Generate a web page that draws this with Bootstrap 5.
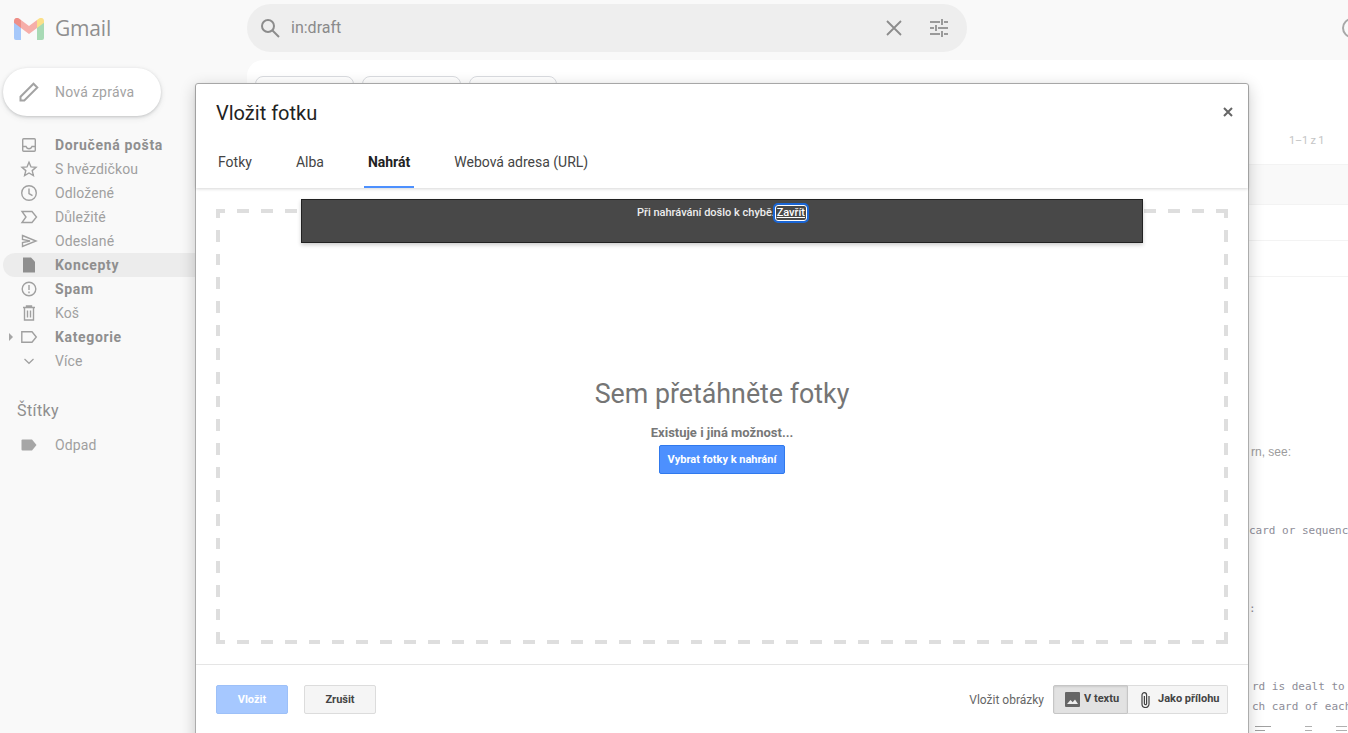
<!DOCTYPE html>
<html lang="cs">
<head>
  <meta charset="UTF-8" />
  <title>Gmail - Vložit fotku</title>
  <link href="https://cdn.jsdelivr.net/npm/bootstrap@5.3.0/dist/css/bootstrap.min.css" rel="stylesheet">
  <style>
    html, body { height: 733px; overflow: hidden; }
    body { background: #f9f9f9; font-family: Roboto, "Liberation Sans", sans-serif; position: relative; }

    /* gmail behind the dialog */
    .top-bar { height: 60px; }
    .logo-cell { width: 247px; padding-left: 14px; gap: 11px; margin-top: -3px; }
    .logo-word { font-family: "Open Sans", sans-serif; font-size: 21px; color: #8f8f8f; letter-spacing: -.2px; }
    .search-box { width: 720px; height: 48px; margin-top: -4px; background: #eeeeee; border-radius: 24px; color: #8a8a8a; font-size: 16px; }
    .search-lens { margin-left: 13px; margin-right: 11px; }
    .search-x { margin-right: 28px; }
    .search-tune { margin-right: 19px; }
    .help-ring { margin-left: auto; margin-right: -16px; margin-top: -4px; }

    .side-col { width: 247px; flex: none; }
    .compose-btn { width: 158px; height: 48px; margin: 8px 0 17px 3px; background: #fff; border-radius: 24px; box-shadow: 0 1px 3px rgba(60,64,67,.22), 0 2px 6px rgba(60,64,67,.1); color: #a3a3a3; font-size: 14px; letter-spacing: .25px; padding-left: 16px; gap: 16px; }
    .side-item { height: 24px; margin-left: 3px; padding-left: 16px; gap: 16px; font-size: 14px; color: #a0a0a0; letter-spacing: .1px; position: relative; border-radius: 12px 0 0 12px; }
    .side-item b { font-weight: 700; color: #8f8f8f; letter-spacing: .65px; }
    .side-item.is-on { background: #ececec; }
    .side-item svg { width: 20px; height: 20px; flex: none; }
    .side-caret { position: absolute; left: 6px; top: 8px; width: 0; height: 0; border-left: 4px solid #a6a6a6; border-top: 4px solid transparent; border-bottom: 4px solid transparent; }
    .labels-head { font-size: 16px; color: #8f8f8f; margin: 26px 0 10px 17px; letter-spacing: .4px; }

    .mail-pane { flex: 1; height: 673px; background: #fff; border-radius: 16px 0 0 0; overflow: hidden; }
    .chip-row { gap: 8px; padding: 16px 0 0 8px; height: 69px; overflow: hidden; }
    .chip-stub { height: 40px; border: 1px solid #dadce0; border-radius: 8px; }
    .count-row { height: 24px; margin-bottom: 11px; padding-left: 1042px; font-size: 11px; letter-spacing: -.2px; color: #c4c4c4; }
    .mail-line { margin-left: 1000px; border-bottom: 1px solid #f3f3f3; }
    .mail-row1 { height: 41px; background: #f9f9f9; border-top: 1px solid #f3f3f3; }
    .mail-row2 { height: 36px; }
    .mail-row3 { height: 36px; }
    .gap-a { height: 165px; }
    .gap-b { height: 58px; }
    .gap-c { height: 59px; }
    .body-text { margin-left: 1002px; white-space: nowrap; overflow: hidden; color: #9c9c9c; height: 20px; line-height: 20px; }
    .body-sans { font-size: 12px; font-family: "Liberation Sans", sans-serif; padding-left: 2px; }
    .body-mono { font-size: 11px; font-family: "DejaVu Sans Mono", monospace; color: #8d8d98; }
    .body-shift { padding-left: 3px; }
    .fmt-row { margin: 9px 0 0 1000px; gap: 29px; padding-left: 8px; }
    .fmt-last { margin-left: -8px; }

    /* dialog */
    .photo-dialog { position: absolute; left: 195px; top: 83px; width: 1054px; height: 680px; background: #fff; border: 1px solid #acacac; border-radius: 3px 3px 0 0; box-shadow: 0 4px 16px rgba(0,0,0,.2); }
    .dialog-head { height: 104px; box-shadow: 0 1px 3px rgba(0,0,0,.16); position: relative; }
    .dialog-title { font-size: 20px; color: #222; padding: 15px 0 0 20px; line-height: 28px; height: 60px; }
    .dialog-close { position: absolute; right: 14px; top: 22px; width: 12px; height: 12px; padding: 0; background: none; border: 0; }
    .tab-row { padding-left: 22px; font-size: 14px; }
    .tab-item { height: 44px; line-height: 36px; color: #444; margin-right: 44px; text-decoration: none; position: relative; }
    .tab-item.is-on { font-weight: 700; color: #222; }
    .tab-item.is-on::after { content: ""; position: absolute; left: -4px; right: -4px; bottom: 0; height: 2px; background: #4d90fe; }

    .drop-wrap { padding: 21px 20px 0 20px; height: 477px; position: relative; border-bottom: 1px solid #e5e5e5; }
    .drop-area { height: 435px; background-repeat: no-repeat;
      background-image:
        repeating-linear-gradient(90deg, #dedede 0 9px, transparent 9px 21px, #dedede 21px 23.87px),
        repeating-linear-gradient(90deg, #dedede 0 9px, transparent 9px 21px, #dedede 21px 23.87px),
        repeating-linear-gradient(180deg, #dedede 0 9px, transparent 9px 21px, #dedede 21px 23.67px),
        repeating-linear-gradient(180deg, #dedede 0 9px, transparent 9px 21px, #dedede 21px 23.67px);
      background-size: 100% 4px, 100% 4px, 4px 100%, 4px 100%;
      background-position: 0 0, 0 100%, 0 0, 100% 0; }
    .drop-title { font-size: 26.800px; color: #757575; line-height: 36px; margin-top: 2px; }
    .drop-sub { font-size: 13px; font-weight: 700; color: #777; margin-top: 13px; line-height: 16px; }
    .pick-btn { font-size: 11px; font-weight: 700; color: #fff; background: #4d90fe; border: 1px solid #3079ed; border-radius: 2px; height: 29px; padding: 0 8px; margin: 4px 0 5px; line-height: 1; }

    .error-bar { position: absolute; left: 105px; top: 11px; width: 842px; height: 44px; background: #484848; border: 1px solid #222; color: #eee; font-size: 11px; font-weight: 500; box-shadow: 0 2px 4px rgba(0,0,0,.2); padding-top: 5px; line-height: 16px; }
    .error-bar a { color: #fff; padding: 0 2px; margin-left: -3px; border-radius: 3px; outline: 2px solid #1a66d6; box-shadow: 0 0 0 1px #fff inset; display: inline-block; }

    .dialog-foot { padding: 20px 20px 0 20px; font-size: 11px; }
    .flat-btn { width: 72px; height: 29px; font-size: 11px; font-weight: 700; border-radius: 2px; padding: 0; line-height: 1; }
    .flat-go { background: #a6c8ff; border: 1px solid #9dc0f8; color: #fff; margin-right: 16px; }
    .flat-no { background: #f5f5f5; border: 1px solid #dcdcdc; color: #444; }
    .mode-label { font-size: 12px; color: #666; margin-right: 9px; }
    .mode-group { height: 29px; }
    .mode-btn { height: 29px; font-size: 11px; font-weight: 700; color: #444; background: #f5f5f5; border: 1px solid #dcdcdc; padding: 0; gap: 4px; }
    .mode-inline { width: 75px; background: #e2e2e2; border-color: #c6c6c6; border-radius: 2px 0 0 2px; box-shadow: inset 0 1px 2px rgba(0,0,0,.1); padding-left: 11px; }
    .mode-attach { width: 100px; border-left: 0; border-radius: 0 2px 2px 0; padding-left: 12px; gap: 7px; }
  </style>
</head>
<body>
  <div class="top-bar d-flex align-items-center">
    <div class="logo-cell d-flex align-items-center">
      <svg width="30" height="22" viewBox="0 0 30 22"><path d="M0 3v17a2 2 0 0 0 2 2h5V9z" fill="#a6c8fa"/><path d="M30 3v17a2 2 0 0 1-2 2h-5V9z" fill="#a8dab5"/><path d="M23 2l-8 6-8-6v8l8 6 8-6z" fill="#f6aea9"/><path d="M0 3c0-3 3-4 5-2.500L7 2v8L0 4.800z" fill="#ee8f88"/><path d="M30 3c0-3-3-4-5-2.500L23 2v8l7-5.200z" fill="#fbe08a"/></svg>
      <span class="logo-word">Gmail</span>
    </div>
    <div class="search-box d-flex align-items-center">
      <svg class="search-lens" width="20" height="20" viewBox="0 0 20 20" fill="none" stroke="#8c8c8c" stroke-width="2"><circle cx="8" cy="8" r="6"/><path d="M12.500 12.500L19 19"/></svg>
      <span class="flex-grow-1">in:draft</span>
      <svg class="search-x" width="16" height="16" viewBox="0 0 16 16" stroke="#8c8c8c" stroke-width="1.800"><path d="M1 1l14 14M15 1L1 15"/></svg>
      <svg class="search-tune" width="18" height="18" viewBox="0 0 18 18" stroke="#9a9a9a" stroke-width="2" fill="none"><path d="M0 3h10M14 3h4M12 0v6M0 9h4M8 9h10M6 6v6M0 15h10M14 15h4M12 12v6"/></svg>
    </div>
    <svg class="help-ring" width="24" height="24" viewBox="0 0 24 24" fill="none" stroke="#a8a8a8" stroke-width="2"><circle cx="12" cy="12" r="9"/></svg>
  </div>

  <div class="d-flex">
    <div class="side-col">
      <div class="compose-btn d-flex align-items-center">
        <svg width="20" height="20" viewBox="0 0 20 20" fill="none" stroke="#a3a3a3" stroke-width="2"><path d="M1.500 18.500v-3.800L14.500 1.700l3.800 3.800L5.300 18.500z"/></svg>
        <span>Nová zpráva</span>
      </div>
      <div class="side-item d-flex align-items-center">
        <svg viewBox="0 0 20 20" fill="none" stroke="#a0a0a0" stroke-width="1.400"><rect x="3.700" y="3.700" width="12.600" height="12.600" rx="1"/><path d="M3.700 11.500h3.300c.5 1.500 1.600 2.200 3 2.200s2.500-.7 3-2.200h3.300"/></svg>
        <b>Doručená pošta</b>
      </div>
      <div class="side-item d-flex align-items-center">
        <svg viewBox="0 0 20 20" fill="none" stroke="#a0a0a0" stroke-width="1.400"><path d="M10 3.200l2 4.700 5 .4-3.800 3.300 1.200 5L10 14l-4.400 2.600 1.200-5L3 8.300l5-.4z"/></svg>
        <span>S hvězdičkou</span>
      </div>
      <div class="side-item d-flex align-items-center">
        <svg viewBox="0 0 20 20" fill="none" stroke="#a0a0a0" stroke-width="1.400"><circle cx="10" cy="10" r="7.300"/><path d="M10 5.500V10.500l3.500 2.200"/></svg>
        <span>Odložené</span>
      </div>
      <div class="side-item d-flex align-items-center">
        <svg viewBox="0 0 20 20" fill="none" stroke="#a0a0a0" stroke-width="1.400"><path d="M3 4.500h10l4.500 5.500-4.500 5.500H3L7 10z"/></svg>
        <span>Důležité</span>
      </div>
      <div class="side-item d-flex align-items-center">
        <svg viewBox="0 0 20 20" fill="none" stroke="#a0a0a0" stroke-width="1.400"><path d="M3.500 4.500L17 10 3.500 15.500V11.500L11 10 3.500 8.500z"/></svg>
        <span>Odeslané</span>
      </div>
      <div class="side-item is-on d-flex align-items-center">
        <svg viewBox="0 0 20 20" fill="#8f8f8f"><path d="M4 2.500h8l4 4.200v10.800H4z"/></svg>
        <b>Koncepty</b>
      </div>
      <div class="side-item d-flex align-items-center">
        <svg viewBox="0 0 20 20" fill="none" stroke="#a0a0a0" stroke-width="1.400"><circle cx="10" cy="10" r="6.800"/><path d="M10 6v5M10 12.500v1.800"/></svg>
        <b>Spam</b>
      </div>
      <div class="side-item d-flex align-items-center">
        <svg viewBox="0 0 20 20" fill="none" stroke="#a0a0a0" stroke-width="1.400"><path d="M4 4.500h12M7.500 4.500V3h5v1.500M5.500 4.500v12.500h9V4.500M8.500 7.500v7M11.500 7.500v7"/></svg>
        <span>Koš</span>
      </div>
      <div class="side-item d-flex align-items-center">
        <span class="side-caret"></span>
        <svg viewBox="0 0 20 20" fill="none" stroke="#a0a0a0" stroke-width="1.400"><path d="M2.800 4.700h10.200l4.300 5.300-4.300 5.300H2.800z"/></svg>
        <b>Kategorie</b>
      </div>
      <div class="side-item d-flex align-items-center">
        <svg viewBox="0 0 20 20" fill="none" stroke="#a0a0a0" stroke-width="1.200"><path d="M5.500 8l4.500 4.300L14.500 8"/></svg>
        <span>Více</span>
      </div>
      <div class="labels-head">Štítky</div>
      <div class="side-item d-flex align-items-center">
        <svg viewBox="0 0 20 20" fill="#a6a6a6"><path d="M2.500 5.500a1 1 0 0 1 1-1h9.500l4.500 5.500-4.500 5.500H3.500a1 1 0 0 1-1-1z"/></svg>
        <span>Odpad</span>
      </div>
    </div>

    <div class="mail-pane">
      <div class="chip-row d-flex">
        <div class="chip-stub" style="width: 99px"></div>
        <div class="chip-stub" style="width: 99px"></div>
        <div class="chip-stub" style="width: 88px"></div>
      </div>
      <div class="count-row d-flex align-items-center">1–1 z 1</div>
      <div class="mail-line mail-row1"></div>
      <div class="mail-line mail-row2"></div>
      <div class="mail-line mail-row3"></div>
      <div class="gap-a"></div>
      <div class="body-text body-sans">rn, see:</div>
      <div class="gap-c"></div>
      <div class="body-text body-mono">card or sequence</div>
      <div class="gap-b"></div>
      <div class="body-text body-mono">:</div>
      <div class="gap-b"></div>
      <div class="body-text body-mono body-shift">rd is dealt to</div>
      <div class="body-text body-mono body-shift">ch card of each</div>
      <div class="fmt-row d-flex">
        <svg width="16" height="6" viewBox="0 0 16 6" stroke="#a0a0a0"><path d="M0 .5h16M0 4.500h10"/></svg>
        <svg width="12" height="6" viewBox="0 0 12 6" stroke="#b0b0b0"><path d="M5 .5h7M5 4.500h7"/></svg>
        <svg class="fmt-last" width="14" height="6" viewBox="0 0 14 6" stroke="#b0b0b0"><path d="M3 .5h11M3 4.500h11"/></svg>
      </div>
    </div>
  </div>

  <div class="photo-dialog">
    <div class="dialog-head">
      <div class="dialog-title">Vložit fotku</div>
      <button class="dialog-close" type="button" aria-label="Zavřít">
        <svg class="d-block" width="12" height="12" viewBox="0 0 12 12" stroke="#666" stroke-width="2"><path d="M2 2l8 8M10 2l-8 8"/></svg>
      </button>
      <div class="tab-row d-flex">
        <a class="tab-item" href="#">Fotky</a>
        <a class="tab-item" href="#">Alba</a>
        <a class="tab-item is-on" href="#">Nahrát</a>
        <a class="tab-item" href="#">Webová adresa (URL)</a>
      </div>
    </div>
    <div class="drop-wrap">
      <div class="drop-area d-flex flex-column align-items-center justify-content-center text-center">
        <div class="drop-title">Sem přetáhněte fotky</div>
        <div class="drop-sub">Existuje i jiná možnost...</div>
        <button class="pick-btn" type="button">Vybrat fotky k nahrání</button>
      </div>
      <div class="error-bar text-center">Při nahrávání došlo k chybě. <a href="#">Zavřít</a></div>
    </div>
    <div class="dialog-foot d-flex align-items-center">
      <button class="flat-btn flat-go" type="button">Vložit</button>
      <button class="flat-btn flat-no" type="button">Zrušit</button>
      <span class="mode-label ms-auto">Vložit obrázky</span>
      <div class="mode-group d-flex">
        <button class="mode-btn mode-inline d-flex align-items-center" type="button">
          <svg width="15" height="15" viewBox="0 0 15 15"><rect width="15" height="15" rx="1" fill="#666"/><path d="M2 12l3.500-4 2.200 2.300L10 7.500l3 4.500z" fill="#eee"/></svg>
          <span>V textu</span>
        </button>
        <button class="mode-btn mode-attach d-flex align-items-center" type="button">
          <svg width="11" height="16" viewBox="0 0 11 16" fill="none" stroke="#444" stroke-width="1.200"><path d="M9 4v8a3.500 3.500 0 0 1-7 0V3a2.300 2.300 0 0 1 4.600 0v8.500a1.100 1.100 0 0 1-2.200 0V4"/></svg>
          <span>Jako přílohu</span>
        </button>
      </div>
    </div>
  </div>

  <script src="https://cdn.jsdelivr.net/npm/bootstrap@5.3.0/dist/js/bootstrap.bundle.min.js"></script>
</body>
</html>
